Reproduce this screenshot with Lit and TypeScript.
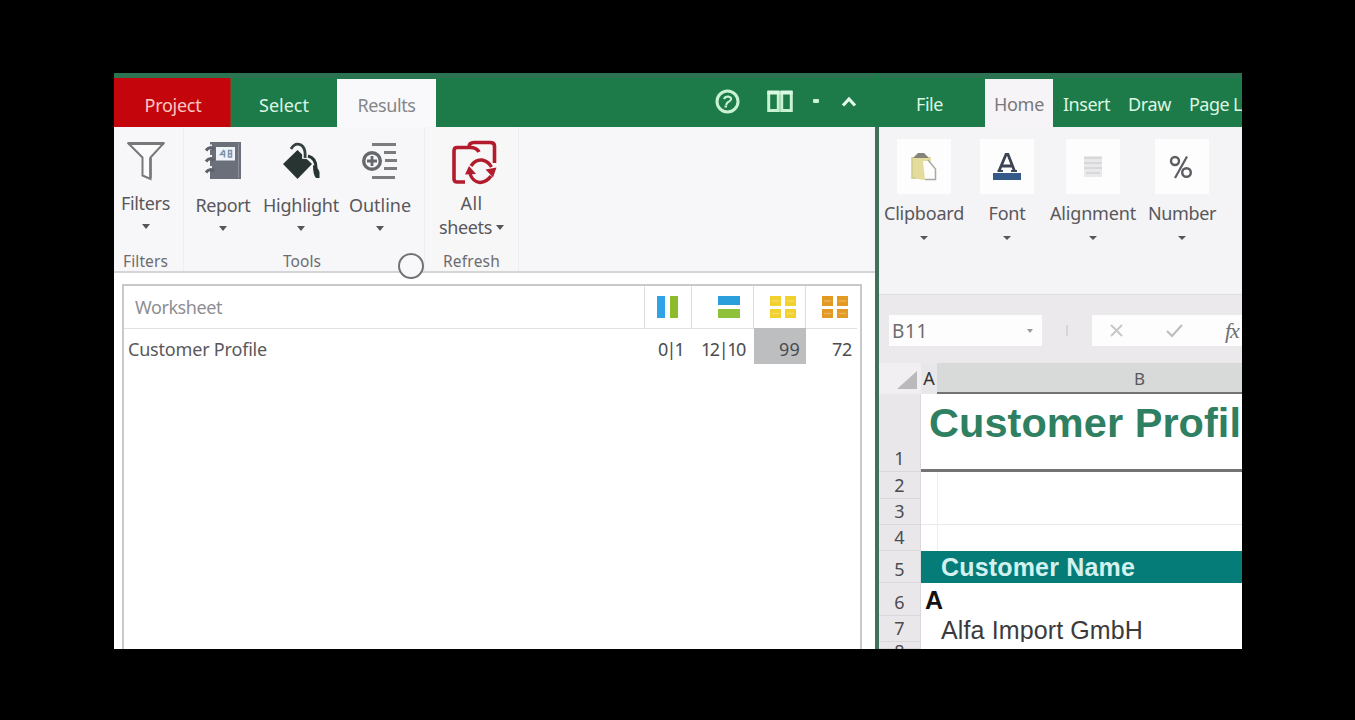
import { LitElement, html, css, svg, TemplateResult } from "lit";
import { customElement, property } from "lit/decorators.js";

/** A one-line label whose tracking is set so that it spans `span` pixels. */
@customElement("fit-label")
class FitLabel extends LitElement {
  @property() text = "";
  @property({ type: Number }) span = 0;
  static styles = css`
    :host { display: block; white-space: pre; flex: none; }
    .t { display: inline-block; }
  `;
  updated() {
    const el = this.renderRoot.querySelector(".t") as HTMLElement;
    el.style.letterSpacing = "0px";
    const natural = el.getBoundingClientRect().width;
    const gap = (this.span - natural) / this.text.length;
    el.style.letterSpacing = gap.toFixed(3) + "px";
  }
  render() {
    return html`<span class="t">${this.text}</span>`;
  }
}

const label = (text: string, span: number, cls = "") =>
  html`<fit-label class=${cls} text=${text} span=${span}></fit-label>`;

const icon = (w: number, h: number, body: TemplateResult) =>
  html`<svg width=${w} height=${h} viewBox="0 0 ${w} ${h}" fill="none">${body}</svg>`;

const filterIcon = icon(38, 40, svg`
  <path d="M1.500 2.500H36.500L23.500 16.500V38L15.500 34.500V16.500Z" fill="#fbfbfb" stroke="#77787b" stroke-width="2"/>
  <path d="M1 2.500H37" stroke="#77787b" stroke-width="3"/>
  <path d="M23.500 17V37" stroke="#77787b" stroke-width="2.500"/>`);

const reportIcon = icon(38, 40, svg`
  <path d="M6 1H37V38H6Z" fill="#6b6f7a"/>
  <path d="M12 6H31V19.500H12Z" fill="#eef4fa"/>
  <path d="M20 9L16.500 13.500H21.500M20.500 9.500V16.500M24.500 9.500H27.500V16H24.500ZM24.500 12.700H27.500" stroke="#7f93ad" stroke-width="1.500"/>
  <path d="M6 3.500v5M6 14v5M6 25v5" stroke="#f6f6f8" stroke-width="4"/>
  <path d="M2 9.500q4-5 8-1M2 20.500q4-5 8-1M2 31.500q4-5 8-1" stroke="#5d616b" stroke-width="3.200"/>
  <path d="M34.500 2V37" stroke="#8b8f99" stroke-width="1"/>`);

const bucketIcon = icon(38, 40, svg`
  <path d="M15.500 9L30 23L15.500 38L1 23Z" fill="#283432"/>
  <path d="M9 8q4-8 10-5q5 3 4 15" stroke="#f6f6f8" stroke-width="6"/>
  <path d="M9 8q4-7 10-4q5 3 4 13" stroke="#34413f" stroke-width="2.800"/>
  <path d="M26 15q8 2 8 12" stroke="#283432" stroke-width="3"/>
  <path d="M31 24q5 2 6.500 7v6h-3.500q-3-3-3-13z" fill="#283432"/>`);

const outlineIcon = icon(38, 40, svg`
  <path d="M11 3.500H35M23 11.500H35M24 19.500H36M23 27.500H36M11 36.500H34" stroke="#7b7c80" stroke-width="3"/>
  <circle cx="11" cy="20" r="8.300" stroke="#66686c" stroke-width="3.400"/>
  <path d="M11 15v10M6 20h10" stroke="#66686c" stroke-width="2.800"/>`);

const refreshIcon = icon(46, 46, svg`
  <path d="M14 43H6Q3 43 3 40V12Q3 8.500 6 8.500H20Q26 9 28 13" stroke="#b21c2d" stroke-width="3.600"/>
  <path d="M18 8Q18 3.500 23 3.500H39Q43.500 3.500 43.500 7V24" stroke="#b21c2d" stroke-width="3.600"/>
  <path d="M20 27Q24 20.500 31 21Q37 22 40.500 28" stroke="#b21c2d" stroke-width="3.400"/>
  <path d="M19 35Q22 43 29 43.500Q36 43 40 37" stroke="#b21c2d" stroke-width="3.400"/>
  <path d="M34.500 30.500L45.500 28.500L42 38.500Z" fill="#b21c2d"/>
  <path d="M14 35.500L18 27L25 35Z" fill="#b21c2d"/>`);

const helpIcon = icon(25, 25, svg`
  <circle cx="12.500" cy="12.500" r="10.500" stroke="#c9f2d3" stroke-width="3"/>
  <path d="M9 10Q10 7.500 13 7.500Q16.500 8 16 10.500Q15.500 12 12.500 13.500L11 16M9.500 17.500h2.500" stroke="#c9f2d3" stroke-width="2.200"/>`);

const panesIcon = icon(26, 24, svg`
  <path d="M1.700 3.500H11.300V21.500H1.700ZM14.700 3.500H24.300V21.500H14.700Z" stroke="#c9f2d3" stroke-width="3"/>
  <path d="M.500 3.500H12.500M13.500 3.500H25.500" stroke="#d9f9e2" stroke-width="4"/>`);

const collapseIcon = icon(16, 13, svg`
  <path d="M2 10.500L8 4L14 10.500" stroke="#e3fbea" stroke-width="3.200"/>`);

const pasteIcon = icon(28, 30, svg`
  <path d="M2 5H21V26L14 28L2 26Z" fill="#e3dc9c"/>
  <path d="M2 5V26H6" stroke="#cfc98d" stroke-width="1.500"/>
  <path d="M3 6L8 1H14L19 6Z" fill="#85837a"/>
  <path d="M13 9H20L26 16V28H15Z" fill="#fdfdfb"/>
  <path d="M18 8L25.500 17V27.500H15" stroke="#aaa9a3" stroke-width="1.500"/>`);

const fontIcon = icon(30, 30, svg`
  <path d="M7 19L14 2.500H16L22.500 19M9.500 14H20" stroke="#3d4452" stroke-width="2.800"/>
  <path d="M5.500 19H11M19 19H25" stroke="#3d4452" stroke-width="2"/>
  <path d="M1 21H29V28H1Z" fill="#355a88"/>`);

const alignIcon = icon(22, 24, svg`
  <path d="M2 1H20V22H2Z" fill="#e9e8ea"/>
  <path d="M2 3H20M2 8H20M2 13H20M4 18H18" stroke="#d8d7da" stroke-width="2"/>`);

const percentIcon = icon(26, 26, svg`
  <circle cx="6" cy="7" r="4" stroke="#5c5d60" stroke-width="2.400"/>
  <circle cx="17.500" cy="18.500" r="4.300" stroke="#5c5d60" stroke-width="2.400"/>
  <path d="M18 2.500L6 24" stroke="#5c5d60" stroke-width="2.200"/>`);

const columnsMark = icon(28, 26, svg`
  <path d="M3 2H11V24H3Z" fill="#2fa3e6"/><path d="M16 2H24V24H16Z" fill="#8dbb2b"/>`);
const rowsMark = icon(28, 26, svg`
  <path d="M3 2H25V11H3Z" fill="#2a9fdc"/><path d="M3 15H25V24H3Z" fill="#8fc13c"/>`);
const gridMark = (fill: string) => icon(28, 26, svg`
  <path d="M1 2H12V12H1ZM16 2H27V12H16ZM1 15H12V24H1ZM16 15H27V24H16Z" fill=${fill}/>
  <path d="M3 7H10M18 7H25M3 19.500H10M18 19.500H25" stroke="#ffffff" stroke-opacity=".25" stroke-width="1.500"/>`);

const caret = html`<i class="caret"></i>`;

@customElement("app-root")
class AppRoot extends LitElement {
  static styles = css`
    :host {
      display: block; width: 1355px; height: 720px; box-sizing: border-box; background: #000;
      padding: 73px 113px 71px 114px; overflow: hidden;
      font-family: "Noto Sans", "Open Sans", sans-serif; font-size: 18px; line-height: 24px; color: #58585c;
    }
    * { box-sizing: border-box; }
    svg { display: block; flex: none; }
    .window { width: 1128px; height: 576px; display: flex; background: #fff; overflow: hidden; }
    .left { width: 761px; display: flex; flex-direction: column; flex: none; }
    .divider { width: 4px; flex: none; background: #41705c; border-top: 54px solid #1d7b49; }
    .right { width: 363px; display: flex; flex-direction: column; background: #f1eff1; overflow: hidden; }
    .tabs { height: 54px; flex: none; background: #1d7b49; border-top: 5px solid #2b7351; display: flex; color: #dcf6e3; }
    .tab { height: 49px; display: flex; justify-content: center; padding-top: 15px; flex: none; }
    .project { width: 117px; background: #c4060c; border-right: 1px solid #8f3a20; color: #f9c7c3; }
    .project fit-label { margin-left: 2px; }
    .select { width: 106px; }
    .results { width: 99px; height: 48px; margin-top: 1px; background: #f9f9fb; color: #85868a; padding-top: 14px; }
    .tools { display: flex; align-items: center; margin-left: auto; padding: 0 18px 3px 0; }
    .tools .dot { width: 6px; height: 4px; background: #c9f2d3; margin: 0 22px 0 20px; border-radius: 1px; }
    .tools .gap { width: 27px; }

    .ribbon { height: 146px; flex: none; display: flex; background: #f7f7f9; border-bottom: 2px solid #d5d5d7; }
    .group { display: flex; flex-direction: column; align-items: center; flex: none; border-right: 1px solid #eeeef1; }
    .buttons { display: flex; height: 125px; flex: none; }
    .button { display: flex; flex-direction: column; align-items: center; padding-top: 14px; flex: none; }
    .button svg { margin-bottom: 12px; }
    .gfilters { width: 70px; padding-right: 6px; }
    .gfilters .button { width: 64px; }
    .gfilters svg { margin-bottom: 10px; }
    .gtools { width: 241px; position: relative; }
    .gtools .buttons { align-self: stretch; }
    .gtools .caption { margin-right: 4px; }
    .w78 { width: 78px; } .w80 { width: 80px; }
    .grefresh { width: 94px; background: #f8f7f8; }
    .grefresh .button { padding-top: 12px; }
    .grefresh svg { margin: 0 0 6px 4px; }
    .sheets { display: flex; align-items: center; gap: 4px; }
    .caption { font-size: 15.500px; line-height: 18px; color: #6c6c70; }
    .caret { display: block; width: 0; height: 0; border: 4px solid transparent; border-top: 5px solid #55565a; border-bottom: 0; }
    .button > .caret { margin-top: 9px; }
    .launcher { position: absolute; left: 214px; top: 126px; width: 26px; height: 26px; border: 2px solid #727276;
      border-radius: 50%; background: #f8f8fa; z-index: 1; }

    .table { margin: 11px 13px 0 8px; flex: 1; border: 2px solid #c9c9cc; border-bottom: 0; background: #fff; padding-right: 3px; }
    .row { display: flex; height: 35px; align-items: center; color: #58585c; }
    .row > * { flex: none; height: 100%; display: flex; align-items: center; }
    .head { height: 43px; border-bottom: 1px solid #e2e2e5; color: #8e8e92; }
    .head > * { border-right: 1px solid #dedee1; }
    .name { width: 521px; padding-left: 4px; padding-top: 5px; }
    .head .name { padding-left: 11px; }
    .head .name fit-label { margin-top: -6px; }
    .c1 { width: 47px; } .c2 { width: 62px; } .c3 { width: 52px; } .c4 { width: 50px; }
    .head > .c4 { border: 0; }
    .num { justify-content: flex-end; padding-top: 5px; padding-right: 9px; color: #4c4c50; }
    .hot { background: #bdbec0; margin-top: -1px; height: 36px; padding-right: 6px; }
    .num.c4 { padding-right: 4px; }
    .mark1 { padding-left: 9px; } .mark2 { padding-left: 23px; } .mark3 { padding-left: 15px; } .mark4 { padding-left: 15px; }
    .mark1, .mark2, .mark3, .mark4 { padding-bottom: 1px; }

    .rtabs > fit-label { padding-top: 14px; }
    .rtabs .file { margin: 0 42px 0 37px; }
    .rtabs .insert { margin: 0 18px 0 10px; }
    .rtabs .draw { margin-right: 18px; }
    .home { width: 68px; height: 48px; margin-top: 1px; background: #f6f4f6; color: #77787b; padding-top: 13px; }
    .xribbon { height: 168px; flex: none; display: flex; padding: 12px 0 0 2px; background: #f4f3f5; border-bottom: 1px solid #e0dde0; }
    .xbutton { display: flex; flex-direction: column; align-items: center; flex: none; }
    .tile { width: 54px; height: 55px; background: #fdfdfe; display: flex; align-items: center; justify-content: center; margin-bottom: 7px; }
    .xbutton .caret { margin-top: 11px; border-width: 4px 4px 0; }
    .w86 { width: 86px; } .w92 { width: 92px; }
    .formula { height: 68px; flex: none; display: flex; padding: 20px 0 17px 10px; background: #ebe9eb; }
    .box { background: #fdfdfd; display: flex; align-items: center; height: 31px; flex: none; }
    .namebox { width: 153px; padding: 0 9px 0 3px; justify-content: space-between; font-size: 19px; color: #6c6c70; }
    .namebox .caret { border-width: 4px 3px 0; border-top-color: #999; }
    .grip { width: 51px; height: 11px; align-self: center; display: flex; justify-content: center; }
    .grip i { width: 2px; background: #d7d5d8; }
    .entry { width: 150px; padding-left: 18px; }
    .entry .gap { width: 42px; }
    .fx { font: italic 22px "Liberation Serif", serif; margin-left: 41px; color: #6e6e72; letter-spacing: -1px; white-space: pre; }

    .colhead { display: flex; height: 31px; flex: none; }
    .corner { width: 42px; display: flex; justify-content: flex-end; align-items: flex-end; padding: 0 4px 5px 0; }
    .colA { width: 16px; background: #e8e7e9; color: #343437; padding-top: 3px; text-align: center; }
    .colB { flex: 1; background: #d8d9d9; border-bottom: 2px solid #727374; padding-left: 197px; padding-top: 4px; font-size: 17px; }
    .sheet { flex: 1; display: flex; flex-direction: column; font-family: "Liberation Sans", Arial, sans-serif; }
    .srow { display: flex; flex: none; }
    .rh { width: 42px; flex: none; background: #eae7ea; border-right: 1px solid #dbd8db; border-bottom: 1px solid #dad7da;
      display: flex; align-items: flex-end; justify-content: center; font: 18px/24px "Noto Sans", sans-serif; color: #4c4c50; padding-bottom: 1px; }
    .cell { flex: 1; background: #fff; white-space: nowrap; }
    .h1 { height: 78px; } .h26 { height: 26px; } .h27 { height: 27px; } .h32 { height: 32px; } .h33 { height: 33px; } .h7 { height: 7px; }
    .h7 .rh { align-items: flex-start; line-height: 19px; }
    .title { border-bottom: 3px solid #737374; font-weight: 700; font-size: 41.500px; line-height: 47px; padding: 5px 0 0 8px; color: #2f7f62; }
    .inset { background: linear-gradient(#ededed, #ededed) 16px 0 / 1px 100% no-repeat #fff; }
    .lined { border-bottom: 1px solid #e9e9e9; }
    .teal { background: #067c79; color: #d3f2ef; font-weight: 700; font-size: 25px; line-height: 33px; padding-left: 20px; }
    .bold { color: #111; font-weight: 700; font-size: 25px; line-height: 34px; padding-left: 4px; }
    .plain { color: #3b3b3d; font-size: 25px; line-height: 28px; padding-left: 20px; }
  `;

  private button(cls: string, pic: TemplateResult, text: string, span: number) {
    return html`<div class="button ${cls}">${pic}${label(text, span)}${caret}</div>`;
  }

  private xbutton(cls: string, pic: TemplateResult, text: string, span: number) {
    return html`<div class="xbutton ${cls}"><div class="tile">${pic}</div>${label(text, span)}${caret}</div>`;
  }

  private srow(h: string, n: string, cls: string, content: unknown = "") {
    return html`<div class="srow ${h}"><div class="rh">${n}</div><div class="cell ${cls}">${content}</div></div>`;
  }

  render() {
    return html`
      <div class="window">
        <div class="left">
          <div class="tabs">
            <div class="tab project">${label("Project", 57)}</div>
            <div class="tab select">${label("Select", 50)}</div>
            <div class="tab results">${label("Results", 58)}</div>
            <div class="tools">${helpIcon}<span class="gap"></span>${panesIcon}<span class="dot"></span>${collapseIcon}</div>
          </div>
          <div class="ribbon">
            <div class="group gfilters">
              <div class="buttons">${this.button("", filterIcon, "Filters", 49)}</div>
              ${label("Filters", 45, "caption")}
            </div>
            <div class="group gtools">
              <div class="buttons">
                ${this.button("w78", reportIcon, "Report", 55)}
                ${this.button("w78", bucketIcon, "Highlight", 76)}
                ${this.button("w80", outlineIcon, "Outline", 62)}
              </div>
              ${label("Tools", 38, "caption")}
              <div class="launcher"></div>
            </div>
            <div class="group grefresh">
              <div class="buttons">
                <div class="button">
                  ${refreshIcon}${label("All", 22)}
                  <div class="sheets">${label("sheets", 53)}${caret}</div>
                </div>
              </div>
              ${label("Refresh", 57, "caption")}
            </div>
          </div>
          <div class="table">
            <div class="row head">
              <div class="name">${label("Worksheet", 87)}</div>
              <div class="c1 mark1">${columnsMark}</div>
              <div class="c2 mark2">${rowsMark}</div>
              <div class="c3 mark3">${gridMark("#f2d12f")}</div>
              <div class="c4 mark4">${gridMark("#e39a22")}</div>
            </div>
            <div class="row">
              <div class="name">${label("Customer Profile", 139)}</div>
              <div class="num c1">${label("0|1", 25)}</div>
              <div class="num c2">${label("12|10", 44)}</div>
              <div class="num c3 hot">${label("99", 21)}</div>
              <div class="num c4">${label("72", 20)}</div>
            </div>
          </div>
        </div>
        <div class="divider"></div>
        <div class="right">
          <div class="tabs rtabs">
            ${label("File", 27, "file")}
            <div class="tab home">${label("Home", 50)}</div>
            ${label("Insert", 47, "insert")}
            ${label("Draw", 43, "draw")}
            ${label("Page L", 53)}
          </div>
          <div class="xribbon">
            ${this.xbutton("w86", pasteIcon, "Clipboard", 80)}
            ${this.xbutton("w80", fontIcon, "Font", 37)}
            ${this.xbutton("w92", alignIcon, "Alignment", 86)}
            ${this.xbutton("w86", percentIcon, "Number", 68)}
          </div>
          <div class="formula">
            <div class="box namebox">${label("B11", 36)}${caret}</div>
            <div class="grip"><i></i></div>
            <div class="box entry">
              ${icon(14, 14, svg`<path d="M1 1L12 12M12 1L1 12" stroke="#c6c6c8" stroke-width="1.800"/>`)}
              <span class="gap"></span>
              ${icon(18, 14, svg`<path d="M1 7L6 12L16 1" stroke="#bcbcbe" stroke-width="2"/>`)}
              <span class="fx">fx</span>
            </div>
          </div>
          <div class="colhead">
            <div class="corner">${icon(20, 18, svg`<path d="M20 0V18H0Z" fill="#bbb9bc"/>`)}</div>
            <div class="colA">A</div>
            <div class="colB">B</div>
          </div>
          <div class="sheet">
            ${this.srow("h1", "1", "title", label("Customer Profil", 312))}
            ${this.srow("h27", "2", "inset")}
            ${this.srow("h26", "3", "inset lined")}
            ${this.srow("h26", "4", "inset")}
            ${this.srow("h32", "5", "teal", label("Customer Name", 194))}
            ${this.srow("h33", "6", "bold", "A")}
            ${this.srow("h26", "7", "plain", label("Alfa Import GmbH", 202))}
            ${this.srow("h7", "8", "")}
          </div>
        </div>
      </div>
    `;
  }
}
